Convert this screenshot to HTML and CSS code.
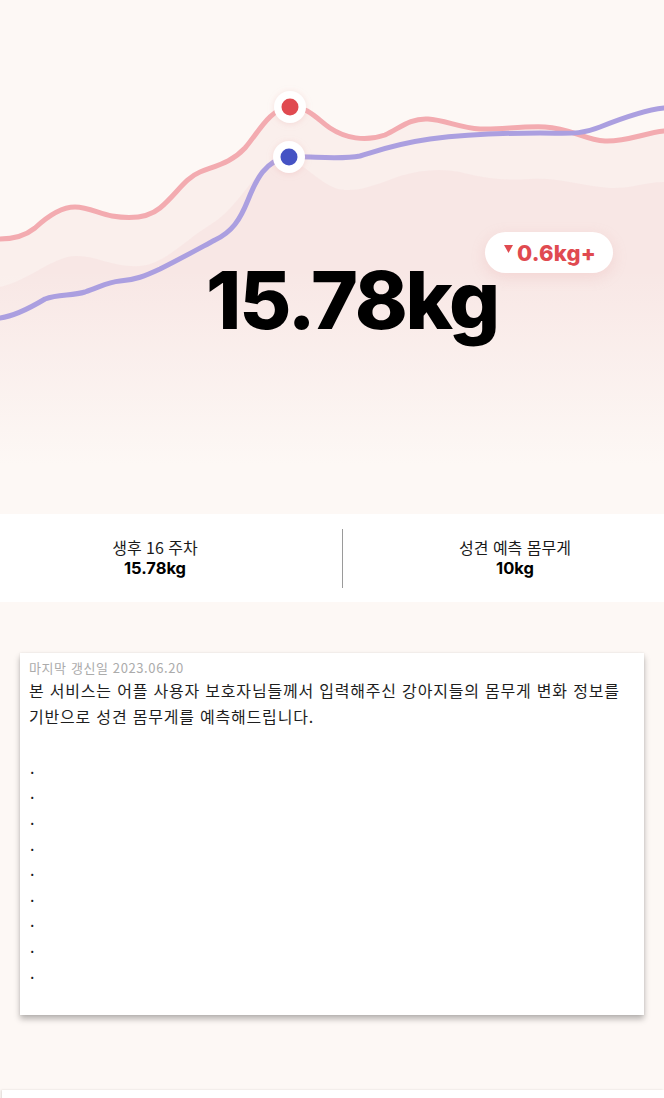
FILE: index.html
```html
<!DOCTYPE html>
<html lang="ko">
<head>
<meta charset="utf-8">
<title>몸무게 예측</title>
<link rel="stylesheet" href="styles.css">
</head>
<body>
<section class="hero">
  <svg class="chart" width="664" height="514" viewBox="0 0 664 514" xmlns="http://www.w3.org/2000/svg">
    <defs>
      <linearGradient id="fade" x1="0" y1="0" x2="0" y2="1">
        <stop offset="0" stop-color="#fdf8f5" stop-opacity="0"/>
        <stop offset="0.35" stop-color="#fdf8f5" stop-opacity="0.45"/>
        <stop offset="0.8" stop-color="#fdf8f5" stop-opacity="1"/>
        <stop offset="1" stop-color="#fdf8f5" stop-opacity="1"/>
      </linearGradient>
      <filter id="sh" x="-50%" y="-50%" width="200%" height="200%">
        <feDropShadow dx="0" dy="1" stdDeviation="3" flood-color="#e8a0a0" flood-opacity="0.3"/>
      </filter>
    </defs>
    <path d="M0,239 C15,239 25,236 35,228 C50,214 62,207 75,207 C88,207 100,214 112,216 C130,219 148,218 160,208 C175,196 185,178 200,172 C218,165 232,162 245,148 C258,133 270,108 290,107 C308,106 318,120 330,128 C345,138 365,142 385,135 C400,128 410,118 428,119 C445,120 460,128 480,129 C500,130 520,126 545,127 C570,128 585,140 605,141 C625,142 645,133 664,131 L664,514 L0,514 Z" fill="#f8e6e3" opacity="0.5"/>
    <path d="M0,287 C30,280 50,258 75,256 C95,255 115,268 140,266 C165,264 185,240 210,225 C235,210 250,180 265,168 C275,160 285,158 295,162 C310,170 320,182 335,188 C355,195 380,183 400,176 C420,170 440,168 460,172 C480,177 500,181 530,179 C560,177 580,186 610,188 C630,189 645,182 664,182 L664,514 L0,514 Z" fill="#f6dedd" opacity="0.45"/>
    <rect x="0" y="270" width="664" height="244" fill="url(#fade)"/>
    <path d="M0,239 C15,239 25,236 35,228 C50,214 62,207 75,207 C88,207 100,214 112,216 C130,219 148,218 160,208 C175,196 185,178 200,172 C218,165 232,162 245,148 C258,133 270,108 290,107 C308,106 318,120 330,128 C345,138 365,142 385,135 C400,128 410,118 428,119 C445,120 460,128 480,129 C500,130 520,126 545,127 C570,128 585,140 605,141 C625,142 645,133 664,131" fill="none" stroke="#f3abb0" stroke-width="5" stroke-linecap="round"/>
    <path d="M0,318 C15,316 30,308 45,299 C58,294 72,296 85,292 C100,287 108,282 120,281 C135,280 145,276 160,269 C180,259 200,248 215,240 C232,232 240,220 248,200 C256,180 265,160 289,157 C310,156 340,160 360,156 C380,150 395,144 430,139 C470,134 500,133 540,133 C570,133 580,135 600,127 C625,117 645,110 664,108" fill="none" stroke="#ab9fe0" stroke-width="5" stroke-linecap="round"/>
    <circle cx="290" cy="107" r="16" fill="#fff" filter="url(#sh)"/>
    <circle cx="290" cy="107" r="8.5" fill="#e04a50"/>
    <circle cx="289" cy="157" r="16" fill="#fff" filter="url(#sh)"/>
    <circle cx="289" cy="157" r="8.5" fill="#4553c4"/>
  </svg>
  <div class="weight">
    <span class="weight-value">15.78kg</span>
    <span class="badge"><svg class="tri" width="9" height="8" viewBox="0 0 9 8"><path d="M0,0 L9,0 L4.5,8 Z" fill="#e04a50"/></svg>0.6kg+</span>
  </div>
</section>

<section class="stats">
  <div class="stat stat-left">
    <div class="stat-label">생후 16 주차</div>
    <div class="stat-value">15.78kg</div>
  </div>
  <div class="divider"></div>
  <div class="stat stat-right">
    <div class="stat-label">성견 예측 몸무게</div>
    <div class="stat-value">10kg</div>
  </div>
</section>

<section class="card">
  <div class="updated">마지막 갱신일 2023.06.20</div>
  <p class="desc">본 서비스는 어플 사용자 보호자님들께서 입력해주신 강아지들의 몸무게 변화 정보를 기반으로 성견 몸무게를 예측해드립니다.</p>
  <div class="blank"></div>
  <ul class="dots">
    <li>.</li><li>.</li><li>.</li><li>.</li><li>.</li><li>.</li><li>.</li><li>.</li><li>.</li>
  </ul>
</section>

<div class="next"></div>
</body>
</html>
```
FILE: styles.css
```css
* { box-sizing: border-box; }
html, body { margin: 0; padding: 0; }
body {
  background: #fdf8f5;
  font-family: "Noto Sans CJK KR", "Noto Sans", sans-serif;
  color: #1a1a1a;
  width: 664px;
  overflow: hidden;
}

.hero {
  position: relative;
  height: 514px;
  background: #fdf8f5;
}
.chart {
  position: absolute;
  left: 0;
  top: 0;
  display: block;
}
.weight {
  position: relative;
  padding-top: 250px;
  padding-left: 40px;
  text-align: center;
}
.weight-value {
  font-family: Inter, "Liberation Sans", sans-serif;
  font-weight: 800;
  font-size: 80px;
  line-height: 100px;
  letter-spacing: -2.2px;
  color: #000;
}
.badge {
  position: absolute;
  left: 485px;
  top: 232px;
  width: 128px;
  height: 41px;
  border-radius: 21px;
  background: #fff;
  box-shadow: 0 4px 14px rgba(232, 160, 160, 0.25);
  display: flex;
  align-items: center;
  justify-content: center;
  gap: 4px;
  padding-left: 2px;
  font-family: Inter, "Liberation Sans", sans-serif;
  font-weight: 800;
  font-size: 22px;
  color: #e04a50;
  letter-spacing: 0.2px;
}
.tri {
  align-self: flex-start;
  margin-top: 13px;
}

.stats {
  background: #fff;
  height: 88px;
  display: flex;
  align-items: center;
}
.stat {
  text-align: center;
}
.stat-left { width: 310px; }
.stat-right { flex: 1; }
.divider {
  width: 1px;
  height: 59px;
  background: #9a9a9a;
  margin-left: 32px;
  margin-right: 23px;
}
.stat-label {
  font-size: 16px;
  line-height: 21px;
  color: #1a1a1a;
}
.stat-value {
  font-family: Inter, "Noto Sans CJK KR", sans-serif;
  font-weight: 700;
  font-size: 16.5px;
  line-height: 21px;
  letter-spacing: 0;
  color: #000;
}

.card {
  margin: 51px 20px 0 20px;
  background: #fff;
  padding: 4px 10px 30px 9px;
  box-shadow: 0 4px 6px rgba(0, 0, 0, 0.28), 0 0 2px rgba(0, 0, 0, 0.08);
}
.updated {
  font-size: 13px;
  line-height: 21px;
  letter-spacing: 0.6px;
  color: #ababab;
}
.desc {
  margin: 0;
  font-size: 16px;
  line-height: 25.6px;
  letter-spacing: 0.8px;
  word-break: keep-all;
  color: #1e1e1e;
}
.blank { height: 25.6px; }
.dots {
  list-style: none;
  margin: 0;
  padding: 0 0 0 1px;
  font-size: 16px;
  line-height: 25.6px;
}

.next {
  margin-top: 75px;
  margin-left: 2px;
  height: 40px;
  background: #fff;
  box-shadow: -1px 0 2px rgba(0, 0, 0, 0.12);
}
```
